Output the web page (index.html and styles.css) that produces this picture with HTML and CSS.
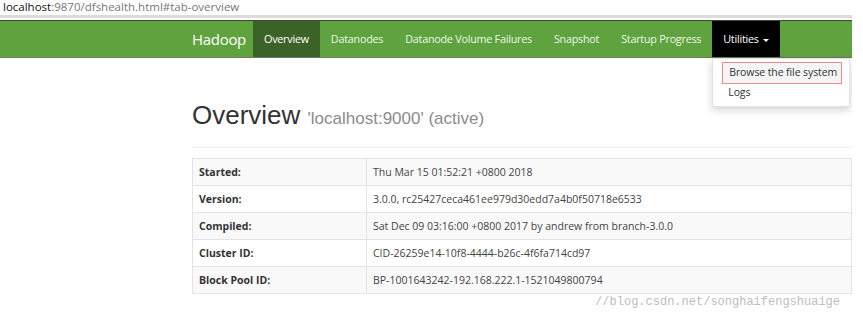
FILE: index.html
```html
<!DOCTYPE html>
<html lang="en">
<head>
    <meta charset="UTF-8">
    <title>Namenode information</title>
    <link rel="stylesheet" href="styles.css">
</head>
<body>
    <div class="addr"><span class="host">localhost</span>:9870/dfshealth.html#tab-overview</div>
    <div class="addr-line"></div>

    <div class="navbar">
        <div class="nav-inner">
            <span class="brand">Hadoop</span>
            <ul class="nav">
                <li class="active"><a>Overview</a></li>
                <li><a>Datanodes</a></li>
                <li><a>Datanode Volume Failures</a></li>
                <li><a>Snapshot</a></li>
                <li><a>Startup Progress</a></li>
                <li class="dropdown open">
                    <a>Utilities <span class="caret"></span></a>
                    <ul class="dropdown-menu">
                        <li class="hl"><a>Browse the file system</a></li>
                        <li><a>Logs</a></li>
                    </ul>
                </li>
            </ul>
        </div>
    </div>

    <div class="container">
        <h1>Overview <small>'localhost:9000' (active)</small></h1>
        <hr>
        <table class="info">
            <tr><th>Started:</th><td>Thu Mar 15 01:52:21 +0800 2018</td></tr>
            <tr><th>Version:</th><td>3.0.0, rc25427ceca461ee979d30edd7a4b0f50718e6533</td></tr>
            <tr><th>Compiled:</th><td>Sat Dec 09 03:16:00 +0800 2017 by andrew from branch-3.0.0</td></tr>
            <tr><th>Cluster ID:</th><td>CID-26259e14-10f8-4444-b26c-4f6fa714cd97</td></tr>
            <tr><th>Block Pool ID:</th><td>BP-1001643242-192.168.222.1-1521049800794</td></tr>
        </table>
        <div class="watermark">//blog.csdn.net/songhaifengshuaige</div>
    </div>
</body>
</html>
```

FILE: styles.css
```css
body {
    margin: 0;
    width: 852px;
    font-family: 'Open Sans', Arial, sans-serif;
    color: #333;
    background-color: #fff;
}

.addr {
    height: 15px;
    padding-left: 3px;
    font-size: 11.5px;
    line-height: 14px;
    color: #777;
    white-space: nowrap;
}

.addr .host {
    color: #111;
}

.addr-line {
    height: 3px;
    background-color: #dcdcdc;
    margin-bottom: 2px;
}

.navbar {
    background-color: #5fa33e;
    border-top: 1px solid #3d4a36;
    border-bottom: 1px solid #6d7a66;
    height: 36px;
}

.nav-inner {
    display: flex;
    height: 36px;
    padding-left: 192px;
}

.brand {
    width: 53px;
    color: #fff;
    font-size: 15px;
    letter-spacing: -0.3px;
    line-height: 36px;
    margin-right: 8px;
    white-space: nowrap;
}

.nav {
    display: flex;
    margin: 0;
    padding: 0;
    list-style: none;
}

.nav > li {
    position: relative;
}

.nav > li > a {
    display: block;
    padding: 0 11px;
    line-height: 36px;
    font-size: 10.8px;
    letter-spacing: -0.25px;
    color: #eef5e9;
    white-space: nowrap;
}

.nav > li.active > a {
    background-color: #3c6327;
    color: #fff;
}

.nav > li.open > a {
    background-color: #000;
    color: #fff;
}

.caret {
    display: inline-block;
    width: 0;
    height: 0;
    margin-left: 2px;
    vertical-align: middle;
    border-top: 3px solid #fff;
    border-left: 3px solid transparent;
    border-right: 3px solid transparent;
}

.dropdown-menu {
    position: absolute;
    top: 37px;
    left: 0;
    width: 136px;
    margin: 0;
    padding: 3px 0 4px;
    list-style: none;
    background-color: #fff;
    border: 1px solid #e2e2e2;
    box-shadow: 0 3px 8px rgba(0, 0, 0, 0.18);
    z-index: 10;
}

.dropdown-menu li a {
    display: block;
    padding: 1px 0 2px 15px;
    font-size: 10.5px;
    letter-spacing: -0.1px;
    line-height: 15px;
    color: #333;
    white-space: nowrap;
}

.dropdown-menu li.hl {
    margin: 0 7px 0 9px;
    border: 1px solid #ef8a8a;
    background-color: #f5f5f5;
}

.dropdown-menu li.hl a {
    padding: 2px 0 3px 6px;
}

.container {
    padding-left: 192px;
}

h1 {
    margin: 40px 0 0;
    font-family: 'Liberation Sans', Arial, sans-serif;
    font-size: 26px;
    font-weight: normal;
    line-height: 34px;
    color: #333;
}

h1 small {
    font-size: 17px;
    color: #8c8c8c;
}

hr {
    margin: 11px 0 10px;
    border: 0;
    border-top: 1px solid #eee;
}

.info {
    width: 100%;
    border-collapse: collapse;
    font-size: 10.5px;
}

.info th,
.info td {
    height: 26px;
    padding: 0 6px;
    border: 1px solid #e3e3e3;
    text-align: left;
    white-space: nowrap;
}

.info th {
    width: 161px;
    font-weight: bold;
    color: #333;
}

.info td {
    color: #444;
}

.info tr:nth-child(odd) {
    background-color: #f9f9f9;
}

.watermark {
    margin-top: 1px;
    padding-right: 12px;
    text-align: right;
    font-family: 'Liberation Mono', monospace;
    font-size: 12px;
    line-height: 14px;
    color: #bdbdbd;
}
```
